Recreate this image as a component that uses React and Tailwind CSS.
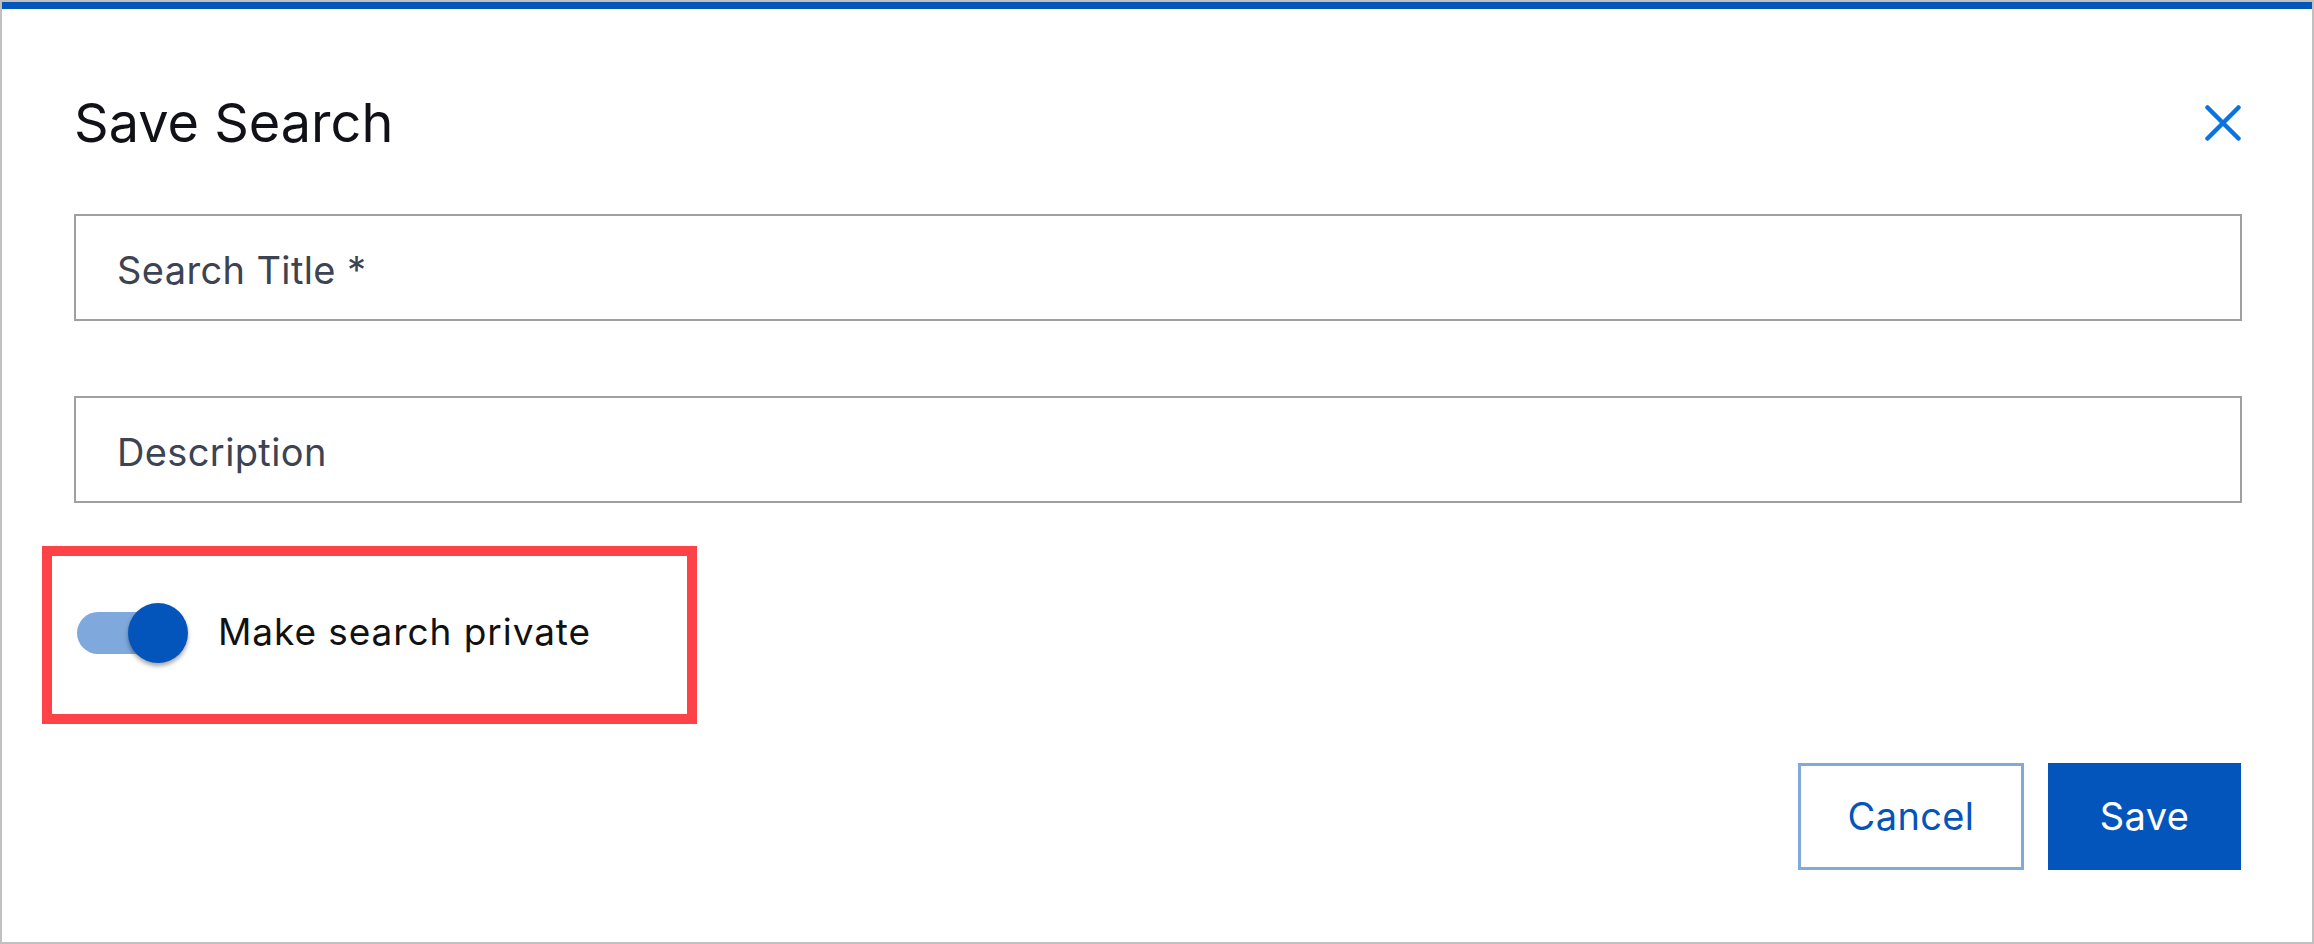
import React from "react";

function CloseIcon() {
  return (
    <svg width="36" height="36" viewBox="0 0 36 36" fill="none">
      <path
        d="M2.5 2.5 L33.5 33.5 M33.5 2.5 L2.5 33.5"
        stroke="#0b73df"
        strokeWidth="4.5"
        strokeLinecap="round"
      />
    </svg>
  );
}

function Field({ label, className = "" }) {
  return (
    <div
      className={`h-[107px] border-2 border-[#a0a0a0] flex items-center pl-[41px] pt-[6px] text-[38px] tracking-[0.01em] text-[#3c4352] ${className}`}
    >
      {label}
    </div>
  );
}

function Toggle() {
  return (
    <div className="relative w-[111px] h-[60px] shrink-0">
      <div className="absolute left-0 top-[9px] w-[102px] h-[42px] rounded-full bg-[#7fa8dc]" />
      <div className="absolute left-[51px] top-0 w-[60px] h-[60px] rounded-full bg-[#0455bb] shadow-[0_3px_4px_rgba(0,0,0,0.35)]" />
    </div>
  );
}

export default function App() {
  return (
    <div
      className="w-[2314px] h-[944px] border-2 border-[#c0c0c0] bg-white flex flex-col"
      style={{ fontFamily: "Inter, 'Noto Sans', sans-serif" }}
    >
      <div className="h-[7px] bg-[#0457b9] shrink-0" />
      <div className="pl-[72px] pr-[70px] flex flex-col">
        <div className="mt-[81px] h-[65px] flex items-center justify-between">
          <h2 className="text-[54px] leading-[65px] text-[#111118] font-normal">
            Save Search
          </h2>
          <button className="mr-[1px]">
            <CloseIcon />
          </button>
        </div>

        <Field label="Search Title *" className="mt-[59px]" />
        <Field label="Description" className="mt-[75px]" />

        <div className="mt-[43px] ml-[-32px] w-[655px] h-[178px] border-[10px] border-[#fd4347] flex items-center pl-[25px] pb-[4px]">
          <Toggle />
          <span className="ml-[30px] mb-[3px] text-[37px] tracking-[0.025em] text-[#111111]">
            Make search private
          </span>
        </div>

        <div className="mt-[39px] flex justify-end gap-[24px]">
          <button className="w-[226px] h-[107px] border-[3px] border-[#80a9dc] text-[#0455bb] text-[38px] tracking-[0.01em] flex items-center justify-center">
            Cancel
          </button>
          <button className="w-[193px] h-[107px] bg-[#0455bb] text-white text-[38px] tracking-[0.01em] flex items-center justify-center mr-[1px]">
            Save
          </button>
        </div>
      </div>
    </div>
  );
}
